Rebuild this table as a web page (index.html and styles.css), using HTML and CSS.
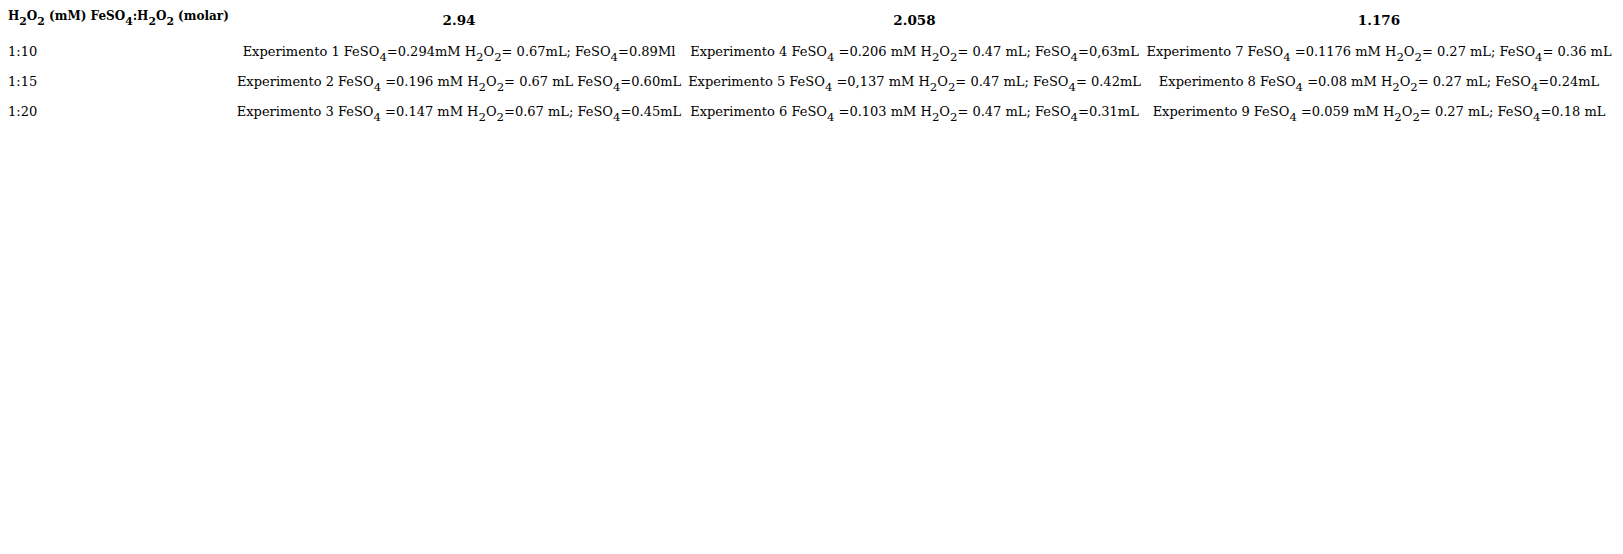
FILE: index.html
```html
<!DOCTYPE html>
<html>
<head>
<meta charset="utf-8">
<link rel="stylesheet" href="styles.css">
</head>
<body>
<table class="exp-table">
  <colgroup>
    <col class="c-ratio">
    <col class="c-a">
    <col class="c-b">
    <col class="c-c">
  </colgroup>
  <thead>
    <tr class="head-row">
      <th class="corner">H<sub>2</sub>O<sub>2</sub> (mM) FeSO<sub>4</sub>:H<sub>2</sub>O<sub>2</sub> (molar)</th>
      <th class="conc">2.94</th>
      <th class="conc">2.058</th>
      <th class="conc">1.176</th>
    </tr>
  </thead>
  <tbody>
    <tr>
      <td class="ratio">1:10</td>
      <td class="exp">Experimento 1 FeSO<sub>4</sub>=0.294mM H<sub>2</sub>O<sub>2</sub>= 0.67mL; FeSO<sub>4</sub>=0.89Ml</td>
      <td class="exp">Experimento 4 FeSO<sub>4</sub> =0.206 mM H<sub>2</sub>O<sub>2</sub>= 0.47 mL; FeSO<sub>4</sub>=0,63mL</td>
      <td class="exp">Experimento 7 FeSO<sub>4</sub> =0.1176 mM H<sub>2</sub>O<sub>2</sub>= 0.27 mL; FeSO<sub>4</sub>= 0.36 mL</td>
    </tr>
    <tr>
      <td class="ratio">1:15</td>
      <td class="exp">Experimento 2 FeSO<sub>4</sub> =0.196 mM H<sub>2</sub>O<sub>2</sub>= 0.67 mL FeSO<sub>4</sub>=0.60mL</td>
      <td class="exp">Experimento 5 FeSO<sub>4</sub> =0,137 mM H<sub>2</sub>O<sub>2</sub>= 0.47 mL; FeSO<sub>4</sub>= 0.42mL</td>
      <td class="exp">Experimento 8 FeSO<sub>4</sub> =0.08 mM H<sub>2</sub>O<sub>2</sub>= 0.27 mL; FeSO<sub>4</sub>=0.24mL</td>
    </tr>
    <tr>
      <td class="ratio">1:20</td>
      <td class="exp">Experimento 3 FeSO<sub>4</sub> =0.147 mM H<sub>2</sub>O<sub>2</sub>=0.67 mL; FeSO<sub>4</sub>=0.45mL</td>
      <td class="exp">Experimento 6 FeSO<sub>4</sub> =0.103 mM H<sub>2</sub>O<sub>2</sub>= 0.47 mL; FeSO<sub>4</sub>=0.31mL</td>
      <td class="exp">Experimento 9 FeSO<sub>4</sub> =0.059 mM H<sub>2</sub>O<sub>2</sub>= 0.27 mL; FeSO<sub>4</sub>=0.18 mL</td>
    </tr>
  </tbody>
</table>
</body>
</html>
```
FILE: styles.css
```css
html, body {
  background: #ffffff;
}
body {
  margin: 8px;
  font-family: "DejaVu Serif", "Liberation Serif", serif;
  font-size: 13px;
  color: #000000;
}
.exp-table {
  border-collapse: collapse;
  border-spacing: 0;
  table-layout: fixed;
  width: 1607px;
}
.c-ratio { width: 224px; }
.c-a { width: 454px; }
.c-b { width: 457px; }
.c-c { width: 472px; }
.exp-table th,
.exp-table td {
  padding: 0;
  white-space: nowrap;
  line-height: 30.4px;
  vertical-align: middle;
}
.exp-table th {
  font-weight: bold;
  text-align: center;
  font-size: 13.5px;
  line-height: 25px;
  vertical-align: top;
  padding-bottom: 3.5px;
}
.exp-table th.corner {
  text-align: left;
  font-size: 12px;
  line-height: 16px;
}
.exp-table td.ratio {
  text-align: left;
}
.exp-table td.exp {
  text-align: center;
}
sub {
  font-size: 90%;
  vertical-align: -5px;
  line-height: 0;
}
```
